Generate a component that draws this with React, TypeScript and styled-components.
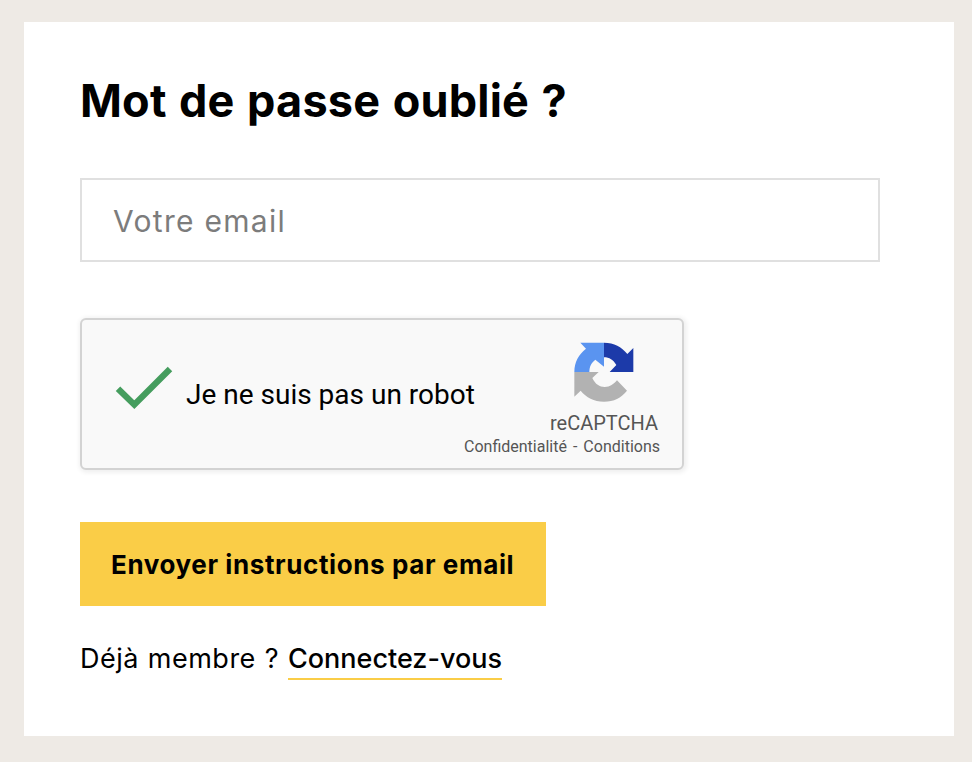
import React from "react";
import styled, { createGlobalStyle } from "styled-components";

const GlobalStyle = createGlobalStyle`
  *, *::before, *::after { box-sizing: border-box; }
  body { margin: 0; background: #eeeae5; font-family: Inter, sans-serif; color: #000; }
`;

const Page = styled.main`
  height: 762px;
  padding: 22px 18px 26px 24px;
`;

const Card = styled.form`
  display: flex;
  flex-direction: column;
  align-items: flex-start;
  height: 714px;
  padding: 48px 56px 0;
  background: #fff;
`;

const Title = styled.h1`
  margin: 0 0 48px;
  height: 60px;
  font-size: 45px;
  line-height: 61px;
  font-weight: 700;
  letter-spacing: 0.2px;
  word-spacing: 1.6px;
  white-space: nowrap;
`;

const EmailInput = styled.input`
  width: 800px;
  height: 84px;
  padding: 2px 32px 0 31px;
  border: 2px solid #e0e0e0;
  border-radius: 0;
  outline: none;
  font-family: Inter, sans-serif;
  font-size: 30px;
  letter-spacing: 1.3px;
  &::placeholder { color: #7c7c7c; opacity: 1; }
`;

const Captcha = styled.div`
  display: flex;
  width: 604px;
  height: 152px;
  margin-top: 56px;
  border: 2px solid #d3d3d3;
  border-radius: 6px;
  background: #f9f9f9;
  box-shadow: 1px 1px 4px 2px rgba(0, 0, 0, 0.06);
  font-family: Roboto, sans-serif;
  white-space: nowrap;
`;

const CheckMark = styled.svg`
  width: 80px;
  height: 60px;
  margin: 35px 0 0 23px;
  flex: none;
`;

const CaptchaLabel = styled.span`
  width: 277px;
  padding: 57px 0 0 1px;
  font-size: 28px;
  line-height: 36px;
`;

const Brand = styled.div`
  display: flex;
  flex-direction: column;
  flex: 1;
  align-items: flex-end;
  padding-right: 22px;
  color: #555;
`;

const BrandLogo = styled.svg`
  width: 90px;
  height: 80px;
  margin: 10px 10px 0 0;
`;

const BrandName = styled.span`
  margin: 1px 2px 0 0;
  font-size: 20px;
  line-height: 24px;
`;

const Legal = styled.span`
  display: flex;
  gap: 6px;
  margin-top: 1px;
  font-size: 16px;
  line-height: 22px;
`;

const SubmitButton = styled.button`
  width: 466px;
  height: 84px;
  margin-top: 52px;
  padding: 0 0 0 31px;
  border: 0;
  background: #facd47;
  color: #000;
  font-family: Inter, sans-serif;
  font-size: 26px;
  font-weight: 700;
  letter-spacing: 0.6px;
  text-align: left;
  white-space: nowrap;
`;

const Member = styled.p`
  display: flex;
  margin: 34px 0 0;
  font-size: 27px;
  line-height: 38px;
  white-space: nowrap;
`;

const Question = styled.span`
  width: 208px;
  letter-spacing: 0.5px;
  word-spacing: 0.8px;
`;

const LoginLink = styled.a`
  width: 214px;
  height: 40px;
  border-bottom: 2px solid #facd47;
  color: #000;
  font-weight: 500;
  text-decoration: none;
`;

export default function App() {
  return (
    <>
      <GlobalStyle />
      <Page>
        <Card>
          <Title>Mot de passe oublié ?</Title>
          <EmailInput type="email" placeholder="Votre email" />
          <Captcha>
            <CheckMark viewBox="0 0 240 180" aria-hidden="true">
              <path d="M39 101L88 149L195 42" fill="none" stroke="#459d5e" strokeWidth="19" />
            </CheckMark>
            <CaptchaLabel>Je ne suis pas un robot</CaptchaLabel>
            <Brand>
              <BrandLogo viewBox="0 0 270 240" aria-hidden="true">
                <path d="M132 38C163 38 184 50 202 72L220 54V126H149L169 105C160 90 148 82 132 82Z" fill="#1c3aa9" />
                <path d="M132 38H61L78 56C56 74 43 95 43 126H88C88 109 94 98 106 89L132 110Z" fill="#5a94f0" />
                <path d="M43 126H116L97 144C106 163 119 171 134 171C151 171 160 163 171 151L201 182C183 204 162 215 132 215C101 215 79 202 62 182L43 200Z" fill="#b2b2b2" />
              </BrandLogo>
              <BrandName>reCAPTCHA</BrandName>
              <Legal>
                <span>Confidentialité</span>
                <span>-</span>
                <span>Conditions</span>
              </Legal>
            </Brand>
          </Captcha>
          <SubmitButton type="button">Envoyer instructions par email</SubmitButton>
          <Member>
            <Question>Déjà membre ?</Question>
            <LoginLink href="#">Connectez-vous</LoginLink>
          </Member>
        </Card>
      </Page>
    </>
  );
}
